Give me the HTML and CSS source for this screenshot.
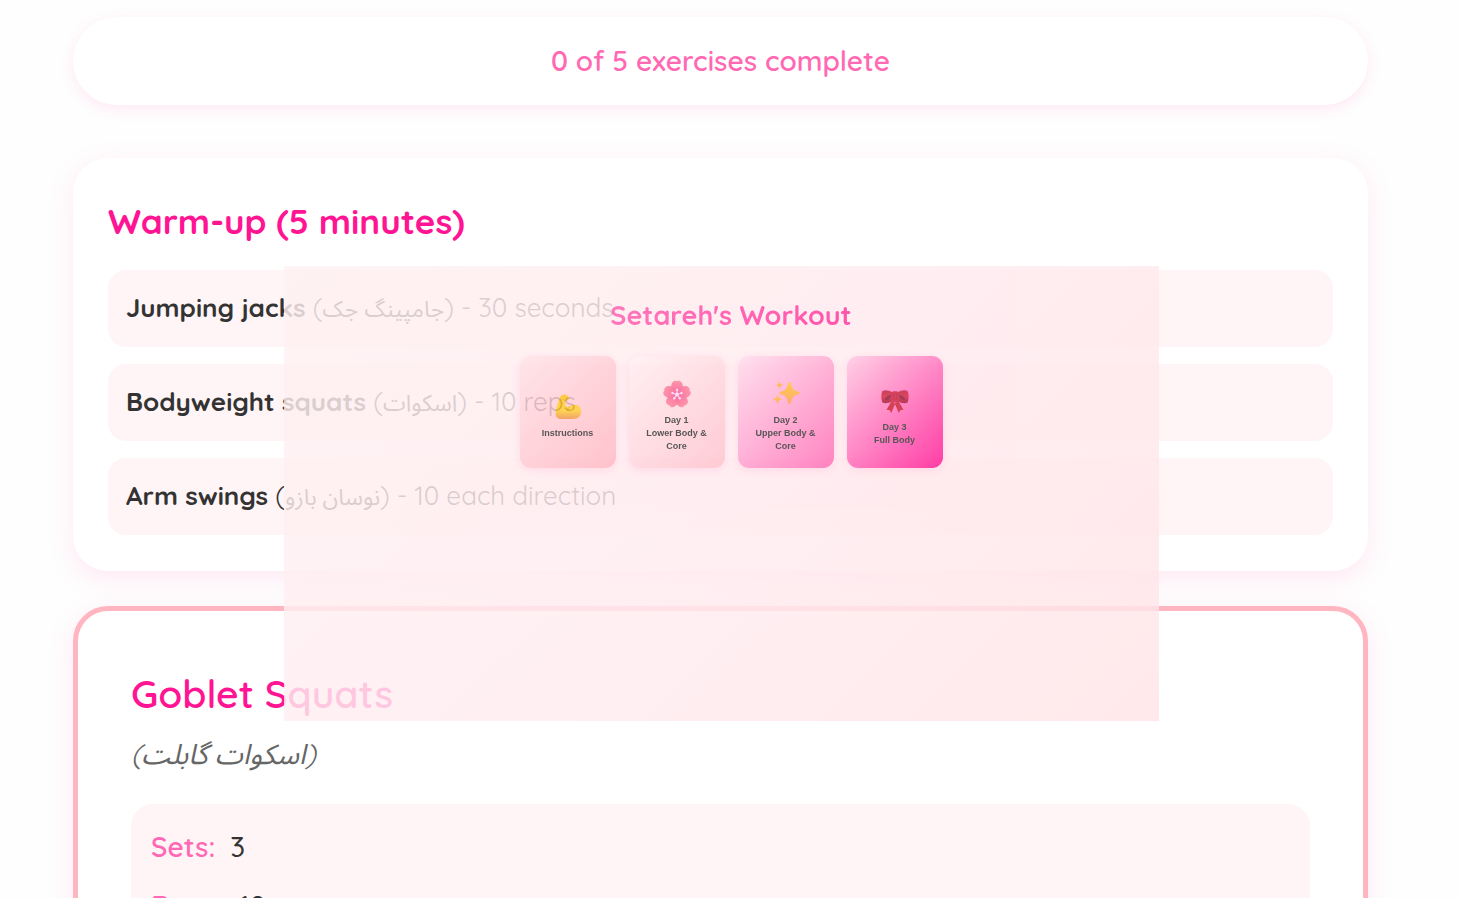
FILE: index.html
```html
<!DOCTYPE html>
<html lang="en">
<head>
<meta charset="utf-8">
<meta name="viewport" content="width=device-width, initial-scale=1">
<title>Setareh's Workout</title>
<link rel="stylesheet" href="styles.css">
</head>
<body>
<main class="page">
  <p class="progress">0 of 5 exercises complete</p>

  <section class="card warmup">
    <h2 class="card-title">Warm-up (5 minutes)</h2>
    <ul class="warmup-list">
      <li class="warmup-item"><strong>Jumping jacks</strong> (<span class="fa" lang="fa">جامپینگ جک</span>) - 30 seconds</li>
      <li class="warmup-item"><strong>Bodyweight squats</strong> (<span class="fa" lang="fa">اسکوات</span>) - 10 reps</li>
      <li class="warmup-item"><strong>Arm swings</strong> (<span class="fa" lang="fa">نوسان بازو</span>) - 10 each direction</li>
    </ul>
  </section>

  <section class="card exercise">
    <h3 class="exercise-title">Goblet Squats</h3>
    <p class="exercise-fa">(<span class="fa-large" lang="fa">اسکوات گابلت</span>)</p>
    <dl class="details">
      <div class="detail"><dt>Sets:</dt><dd>3</dd></div>
      <div class="detail"><dt>Reps:</dt><dd>10</dd></div>
    </dl>
  </section>
</main>

<aside class="overlay">
  <h1 class="overlay-title">Setareh's Workout</h1>
  <nav class="tiles">
    <a class="tile tile-instructions" href="#instructions">
      <svg class="tile-icon" viewBox="0 0 28 28" aria-hidden="true">
        <defs><linearGradient id="arm" x1="0" y1="0" x2="0" y2="1"><stop offset="0" stop-color="#ffbe20"/><stop offset=".65" stop-color="#ffcd2e"/><stop offset="1" stop-color="#f0904c"/></linearGradient></defs>
        <path d="M6 4.500C7 2 9.500 1 12 2c2 .8 3.200 2.200 2.700 3.800-.3 1.400-1.600 2.100-3 1.700-.8 2-.7 3.900.2 5.700 1.200 1 2.300 1 3.600.3 2.800-2.400 7.300-2.600 9.700.1 2.600 3 2.500 8.300-.6 10.700-1.900 1.500-4.500 1.700-8.100 1.700H7.500C3.500 26 1.500 24 1.500 20.500 1.500 15 4.500 9.500 6 4.500z" fill="url(#arm)"/>
        <path d="M11.700 7.500c-1.500 0-2.500-.7-2.800-1.800M15.500 13.500c-1.300 1.200-1.900 2.600-1.600 4.300" fill="none" stroke="#e5a023" stroke-width=".8" stroke-linecap="round"/>
      </svg>
      <span>Instructions</span>
    </a>
    <a class="tile tile-day1" href="#day1">
      <svg class="tile-icon" viewBox="0 0 28 28" aria-hidden="true">
        <defs><linearGradient id="petal" x1="0" y1="0" x2="0" y2="1"><stop offset="0" stop-color="#ff7f98"/><stop offset="1" stop-color="#f75590"/></linearGradient></defs>
        <g fill="url(#petal)" stroke="#ee6088" stroke-width=".4">
          <path id="p" d="M14 14.500C8.500 12.500 7 5.500 9.800 2.300c1.100-1.400 3.100-1.600 4.200-.6 1.100-1 3.100-.8 4.200.6C21 5.500 19.500 12.500 14 14.500z"/>
          <use href="#p" transform="rotate(72 14 14.500)"/><use href="#p" transform="rotate(144 14 14.500)"/><use href="#p" transform="rotate(216 14 14.500)"/><use href="#p" transform="rotate(288 14 14.500)"/>
        </g>
        <g stroke="#ffd9ff" stroke-width="1" fill="#ffd9ff" stroke-linecap="round">
          <g id="s"><path d="M14 14.500V10"/><circle cx="14" cy="9.800" r=".7"/></g>
          <use href="#s" transform="rotate(72 14 14.500)"/><use href="#s" transform="rotate(144 14 14.500)"/><use href="#s" transform="rotate(216 14 14.500)"/><use href="#s" transform="rotate(288 14 14.500)"/>
          <circle cx="14" cy="14.500" r="1.500"/>
        </g>
      </svg>
      <span>Day 1<br>Lower Body &amp; Core</span>
    </a>
    <a class="tile tile-day2" href="#day2">
      <svg class="tile-icon" viewBox="0 0 28 28" aria-hidden="true">
        <defs><linearGradient id="spark" x1="0" y1="0" x2="0" y2="1"><stop offset="0" stop-color="#ffc32e"/><stop offset="1" stop-color="#ff9c4f"/></linearGradient></defs>
        <g fill="url(#spark)">
          <path d="M17.500 2c.9 0 1.200.8 1.500 1.900 1.300 5 2.300 6 6.900 7.500 1.200.4 1.700.8 1.700 1.600s-.5 1.200-1.700 1.600c-4.600 1.500-5.600 2.600-6.900 7.700-.3 1.100-.6 1.900-1.500 1.900s-1.200-.8-1.500-1.900c-1.300-5.100-2.300-6.200-6.900-7.700-1.200-.4-1.700-.8-1.700-1.600s.5-1.200 1.700-1.600c4.600-1.500 5.600-2.500 6.900-7.500.3-1.100.6-1.900 1.500-1.900z"/>
          <path d="M7.500 1c.6 2.600 1 3.100 3.500 3.900-2.500.9-2.900 1.400-3.500 4-.6-2.600-1-3.100-3.500-4 2.500-.8 2.900-1.300 3.500-3.900z"/>
          <path d="M5.500 14c.8 3.500 1.400 4.200 4.600 5.300-3.200 1.100-3.800 1.800-4.600 5.300-.8-3.500-1.400-4.200-4.600-5.300 3.200-1.100 3.800-1.800 4.600-5.300z"/>
        </g>
      </svg>
      <span>Day 2<br>Upper Body &amp; Core</span>
    </a>
    <a class="tile tile-day3" href="#day3">
      <svg class="tile-icon" viewBox="0 0 28 28" aria-hidden="true">
        <defs><linearGradient id="bow" x1="0" y1="0" x2="0" y2="1"><stop offset="0" stop-color="#b81c40"/><stop offset=".5" stop-color="#d81f3a"/><stop offset="1" stop-color="#a01038"/></linearGradient></defs>
        <path d="M10.500 14 5.500 23l3 .1L10.200 26l4.100-9.500zM17.500 14l5 9-3 .1-1.700 2.900-4.100-9.500z" fill="#cc1a34"/>
        <path d="M11.500 5.500C8 3 3.500 2.500 1.500 4 0 6.500 0 13 1.500 15.500c2.500 1.300 6.500.8 10-1.800zM16.500 5.500C20 3 24.500 2.500 26.500 4c1.500 2.500 1.500 9 0 11.500-2.500 1.300-6.500.8-10-1.800z" fill="url(#bow)"/>
        <path d="M3.500 13.500C4 10 6.500 8.200 10.300 8c-.3 3-3 5.300-6.800 5.500zM24.500 13.500c-.5-3.500-3-5.300-6.800-5.500.3 3 3 5.300 6.800 5.500z" fill="#8a1436"/>
        <rect x="10.300" y="4.200" width="7.400" height="11.300" rx="2.500" fill="#d01c3c"/>
        <path d="M12.500 6v7M15.500 6v7" stroke="#a81a40" stroke-width=".7"/>
      </svg>
      <span>Day 3<br>Full Body</span>
    </a>
  </nav>
</aside>
</body>
</html>
```
FILE: styles.css
```css
* { box-sizing: border-box; }

body {
  position: relative;
  height: 100vh;
  margin: 0;
  overflow: hidden;
  background: #fefefe;
  color: #333;
  font-family: Quicksand, Lato, sans-serif;
  font-size: 26px;
}

h1, h2, h3, p, ul, dl, dd { margin: 0; padding: 0; }

.page { padding: 17px 91px 0 73px; }

.progress {
  margin-bottom: 53px;
  padding: 26px;
  border-radius: 44px;
  background: #fff;
  box-shadow: 0 4px 14px rgba(255, 105, 180, .15);
  color: #ff69b4;
  font-size: 28px;
  font-weight: 600;
  line-height: 36px;
  text-align: center;
}

.card {
  border-radius: 35px;
  background: #fff;
  box-shadow: 0 7px 26px rgba(255, 105, 180, .15);
}

.warmup { margin-bottom: 35px; padding: 41px 35px 36px; }

.card-title {
  margin-bottom: 27px;
  color: #ff1493;
  font-size: 35px;
  font-weight: 700;
  line-height: 44px;
}

.warmup-list { display: grid; gap: 17px; list-style: none; }

.warmup-item {
  padding: 17px 18px 19px;
  border-radius: 18px;
  background: #fff5f6;
  line-height: 41px;
  white-space: nowrap;
}

.fa, .fa-large {
  font-family: "Noto Sans Arabic", "DejaVu Sans", sans-serif;
  line-height: 1;
}
.fa { font-size: 23px; }
.fa-large { font-size: 28px; }

.exercise { padding: 57px 53px; border: 5px solid #ffb6c1; }

.exercise-title {
  margin-bottom: 16px;
  color: #ff1493;
  font-size: 39px;
  font-weight: 600;
  line-height: 52px;
}

.exercise-fa {
  margin-bottom: 32px;
  color: #666;
  font-size: 28px;
  font-style: italic;
  line-height: 36px;
}

.details {
  display: grid;
  gap: 21px;
  padding: 24px 20px;
  border-radius: 22px;
  background: #fff5f6;
}

.detail { display: flex; gap: 15px; font-size: 28px; font-weight: 600; line-height: 38px; }
.detail dt { color: #ff69b4; }
.detail dd { font-weight: 500; }

.overlay {
  position: absolute;
  top: 266px;
  left: calc(50% - 446px);
  display: flex;
  flex-direction: column;
  align-items: center;
  gap: 23px;
  width: 875px;
  height: 455px;
  padding: 31px 0 0 20px;
  background: linear-gradient(135deg, #fff2f3, #ffecf0 50%, #ffe4e7);
  opacity: .82;
}

.overlay-title {
  background: linear-gradient(135deg, #ff5fb0, #ff2f9c);
  background-clip: text;
  -webkit-background-clip: text;
  color: transparent;
  font-size: 27px;
  font-weight: 700;
  line-height: 36px;
}

.tiles { display: flex; gap: 13px; }

.tile {
  display: flex;
  flex-direction: column;
  align-items: center;
  justify-content: center;
  gap: 6px;
  width: 96px;
  height: 112px;
  padding: 19px 10px 10px;
  border-radius: 11px;
  box-shadow: 0 2px 8px rgba(255, 105, 180, .2);
  color: #333;
  font-family: "Liberation Sans", Arial, sans-serif;
  font-size: 9px;
  font-weight: 700;
  line-height: 13px;
  text-align: center;
  text-decoration: none;
}

.tile-icon { width: 28px; height: 28px; }

.tile-instructions { background: linear-gradient(135deg, #ffe2e6, #ffb6c1); }
.tile-day1 { background: linear-gradient(135deg, #fff0f3, #ffc0cb); }
.tile-day2 { background: linear-gradient(135deg, #ffdcec, #ff69b4); }
.tile-day3 { background: linear-gradient(135deg, #ffc8e2, #ff1493); }
```
